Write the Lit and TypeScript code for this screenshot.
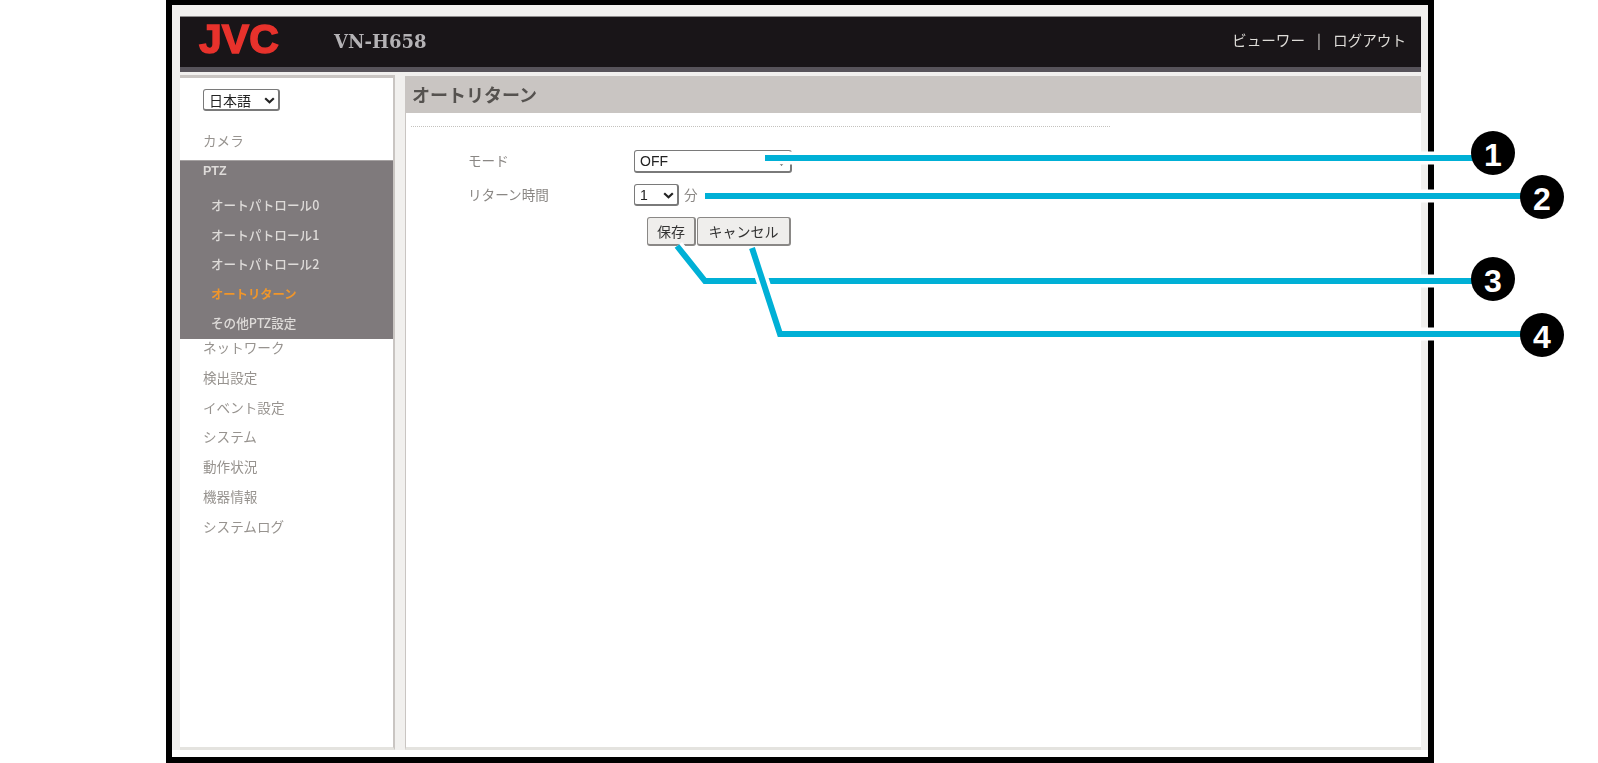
import { LitElement, html, css, svg } from "lit";
import { customElement } from "lit/decorators.js";

const JP = css`"Noto Sans CJK JP", "Liberation Sans", sans-serif`;
const SUBS = ["オートパトロール0", "オートパトロール1", "オートパトロール2", "オートリターン", "その他PTZ設定"];
const REST = ["ネットワーク", "検出設定", "イベント設定", "システム", "動作状況", "機器情報", "システムログ"];
const LINES = [
  "M765 158H1480",
  "M705 196H1530",
  "M677 246L705 281H1480",
  "M752 248L780 334H1530",
];
const BADGES: [number, number, string][] = [
  [1493, 153, "1"],
  [1542, 197, "2"],
  [1493, 279, "3"],
  [1542, 335, "4"],
];

const chevron = html`<svg class="chev" width="11" height="7" viewBox="0 0 11 7" fill="none"><path d="M1.2 1.2L5.5 5.2L9.8 1.2" stroke="#222" stroke-width="2.2"/></svg>`;

@customElement("app-root")
export class AppRoot extends LitElement {
  static styles = css`
    :host { display: block; position: relative; width: 1598px; height: 763px; background: #fff; overflow: hidden; font-family: ${JP}; }
    .frame { box-sizing: border-box; width: 1268px; height: 763px; margin-left: 166px; border: solid #000; border-width: 5px 6px 6px; display: flex; flex-direction: column; }
    .panel { flex: 1; min-height: 0; background: #f1f0ee; padding: 11px 7px 0 8px; display: flex; flex-direction: column; filter: blur(0.6px); }
    .foot { height: 7px; background: #fff; }
    .top { box-sizing: border-box; height: 56px; background: #191518; border-top: 1px solid #8d8b8b; border-bottom: 5px solid #57535a; display: flex; align-items: center; color: #dedcd8; padding-bottom: 4px; flex: none; }
    .logo { width: 135px; margin: -3px 0 0 19px; font: 700 41px/40px "Liberation Sans", sans-serif; color: #e8322c; -webkit-text-stroke: 1.5px #e8322c; }
    .model { font: 700 18px/20px "DejaVu Serif", serif; color: #b4b2b5; margin-top: 4px; }
    .links { margin-left: auto; margin-right: 15px; font-size: 14.6px; line-height: 20px; display: flex; gap: 12px; }
    .body { flex: 1; min-height: 0; display: flex; gap: 10px; margin-top: 3px; }
    .side { box-sizing: border-box; width: 215px; background: #fff; border-top: 3px solid #c9c5c2; border-right: 2px solid #c9c5c2; border-bottom: 3px solid #e4e3df; padding-top: 11px; color: #97938f; font-size: 13.6px; }
    .wrap { position: relative; display: inline-block; vertical-align: top; }
    .chev { position: absolute; right: 5px; top: 50%; margin-top: -3px; }
    .lang-wrap { margin-left: 23px; }
    select { box-sizing: border-box; display: block; appearance: none; -webkit-appearance: none; border: 1px solid #7a7a7a; border-right-width: 2px; border-bottom-width: 2px; border-radius: 3px; background: #fff; padding: 0 0 0 5px; color: #222; outline: none; }
    .lang { width: 77px; height: 22px; font: 14px ${JP}; }
    .nav { margin-top: 19px; }
    .item { box-sizing: border-box; height: 29.8px; line-height: 17px; padding-left: 23px; }
    .first { height: 30px; line-height: 20px; }
    .ptz { background: #7f7a7c; color: #dedbd9; border-top: 1px solid #a5a1a1; height: 179px; box-sizing: border-box; }
    .ptzhead { height: 29px; padding-left: 23px; font: 700 12.5px/20px "Liberation Sans", sans-serif; }
    .sub { box-sizing: border-box; height: 29.5px; line-height: 29.5px; padding-left: 31px; font-size: 12.6px; font-weight: 500; }
    .sub.on { color: #f0962a; font-weight: 700; font-size: 12.3px; line-height: 31px; }
    .main { flex: 1; min-width: 0; margin-top: 1px; background: #fff; border-left: 1px solid #c9c5c2; border-bottom: 3px solid #e4e3df; color: #8a8784; font-size: 13.6px; }
    h1 { margin: 0; height: 37px; background: #c9c5c2; padding-left: 6px; font-size: 18px; line-height: 37px; font-weight: 700; color: #55524f; }
    .rule { width: 699px; margin: 13px 0 0 5px; border-top: 1px dotted #c4c2be; }
    .form { padding: 23px 0 0 62px; }
    .row { display: grid; grid-template-columns: 166px auto; align-items: center; justify-content: start; }
    .row + .row { margin-top: 11px; }
    .lab1 { line-height: 16px; margin-bottom: 4px; }
    .lab2 { line-height: 16px; margin-bottom: 2px; }
    .ctl { display: flex; align-items: center; gap: 5px; }
    .mode { width: 158px; height: 23px; font: 14px "Liberation Sans", sans-serif; }
    .min { width: 45px; height: 22px; font: 14px "Liberation Sans", sans-serif; }
    .btns { display: flex; gap: 1px; margin: 11px 0 0 179px; }
    button { box-sizing: border-box; height: 29px; padding: 0; background: #efeeec; border: 1px solid #8a8886; border-right-width: 2px; border-bottom-width: 2px; border-radius: 3px; font: 14px ${JP}; color: #333; }
    .save { width: 49px; }
    .cancel { width: 94px; }
    .over { position: absolute; left: 0; top: 0; pointer-events: none; }
    .num { font: 700 32px "Liberation Sans", sans-serif; fill: #fff; text-anchor: middle; }
  `;

  render() {
    return html`
      <div class="frame">
        <div class="panel">
          <header class="top">
            <span class="logo">JVC</span>
            <span class="model">VN-H658</span>
            <span class="links"><span>ビューワー</span><span>|</span><span>ログアウト</span></span>
          </header>
          <div class="body">
            <aside class="side">
              <span class="wrap lang-wrap"><select class="lang"><option>日本語</option></select>${chevron}</span>
              <nav class="nav">
                <div class="item first">カメラ</div>
                <div class="ptz">
                  <div class="ptzhead">PTZ</div>
                  ${SUBS.map((s) => html`<div class="sub ${s === "オートリターン" ? "on" : ""}">${s}</div>`)}
                </div>
                ${REST.map((s) => html`<div class="item">${s}</div>`)}
              </nav>
            </aside>
            <main class="main">
              <h1>オートリターン</h1>
              <div class="rule"></div>
              <div class="form">
                <div class="row"><span class="lab1">モード</span><span class="wrap"><select class="mode"><option>OFF</option></select>${chevron}</span></div>
                <div class="row"><span class="lab2">リターン時間</span>
                  <span class="ctl"><span class="wrap"><select class="min"><option>1</option></select>${chevron}</span><span class="lab2">分</span></span>
                </div>
                <div class="btns"><button class="save">保存</button><button class="cancel">キャンセル</button></div>
              </div>
            </main>
          </div>
        </div>
        <div class="foot"></div>
      </div>
      <svg class="over" width="1598" height="763" viewBox="0 0 1598 763" fill="none">
        ${LINES.map(
          (d) => svg`
            <path d=${d} stroke="#fff" stroke-width="13" stroke-linejoin="miter"/>
            <path d=${d} stroke="#00b0d6" stroke-width="6" stroke-linejoin="miter"/>`
        )}
        ${BADGES.map(
          ([x, y, n]) => svg`
            <circle cx=${x} cy=${y} r="22" fill="#000"/>
            <text class="num" x=${x} y=${y + 12.5}>${n}</text>`
        )}
      </svg>
    `;
  }
}
